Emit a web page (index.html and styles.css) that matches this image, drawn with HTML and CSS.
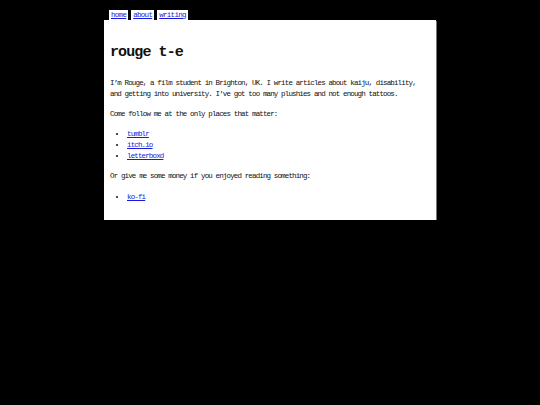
FILE: index.html
```
<!DOCTYPE html>
<html lang="en">
<head>
<meta charset="utf-8">
<title>rouge t-e</title>
<link rel="stylesheet" href="styles.css">
</head>
<body>
<div class="page">
  <nav class="tabs">
    <a class="tab" href="#">home</a>
    <a class="tab" href="#">about</a>
    <a class="tab" href="#">writing</a>
  </nav>
  <main class="card">
    <h1 class="title">rouge t-e</h1>
    <p>I’m Rouge, a film student in Brighton, UK. I write articles about kaiju, disability, and getting into university. I’ve got too many plushies and not enough tattoos.</p>
    <p>Come follow me at the only places that matter:</p>
    <ul class="links">
      <li><a href="#">tumblr</a></li>
      <li><a href="#">itch.io</a></li>
      <li><a href="#">letterboxd</a></li>
    </ul>
    <p class="ask">Or give me some money if you enjoyed reading something:</p>
    <ul class="links">
      <li><a href="#">ko-fi</a></li>
    </ul>
  </main>
</div>
</body>
</html>
```
FILE: styles.css
```
html, body {
  margin: 0;
  padding: 0;
  background: #000;
}
body {
  font-family: "Liberation Mono", "DejaVu Sans Mono", monospace;
  font-size: 7.5px;
  letter-spacing: -0.86px;
  line-height: 11px;
  color: #111;
}
.page {
  width: 332px;
  margin: 0 auto;
  padding-top: 10px;
}
.tabs {
  display: flex;
  gap: 3px;
  padding-left: 5px;
}
.tab {
  display: block;
  background: #fff;
  height: 10px;
  line-height: 11px;
  padding: 0 2px;
  letter-spacing: -0.7px;
  color: #1a1adf;
}
.card {
  background: #fff;
  padding: 6px 10px 8px 6px;
  box-shadow: 1px 1px 0 #777;
}
.title {
  font-size: 15px;
  line-height: 18px;
  letter-spacing: -0.9px;
  font-weight: bold;
  color: #111;
  margin: 18px 0 16px 0;
}
p {
  margin: 0 0 9px 0;
}
.ask {
  margin-bottom: 10px;
}
.links {
  margin: 0 0 9px 0;
  padding-left: 17px;
}
a {
  color: #1a1adf;
}
```
